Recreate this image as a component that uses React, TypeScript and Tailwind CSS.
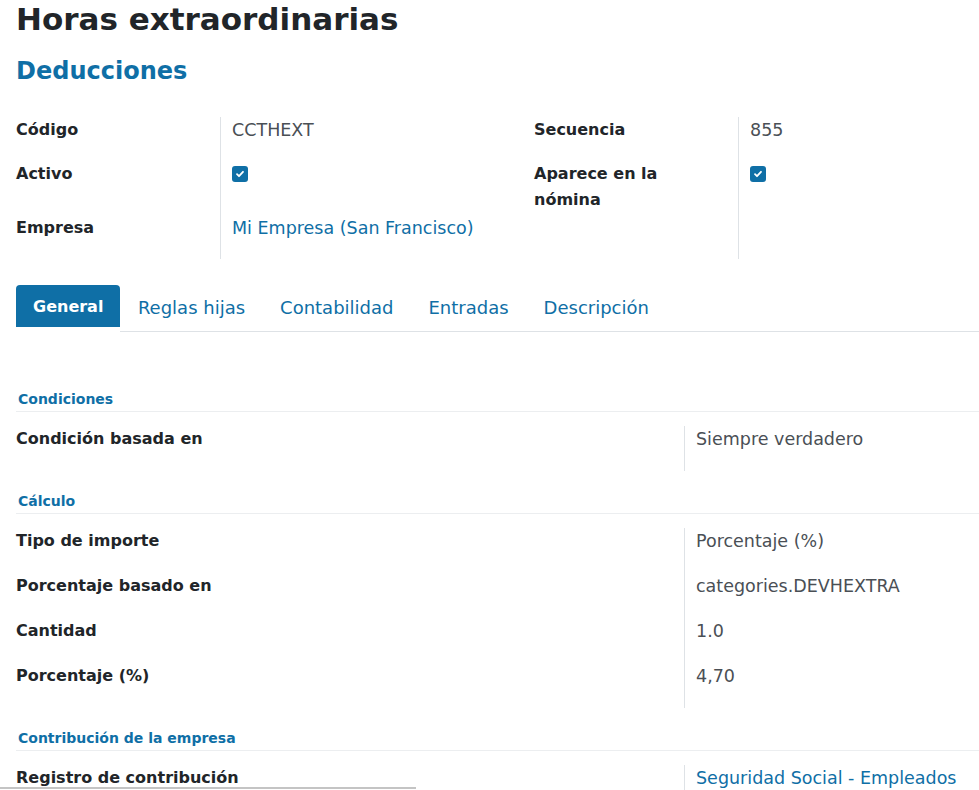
const blue = "text-[#0f6fa6]";

function Check() {
  return (
    <span className="mt-[5px] flex h-[16px] w-[16px] items-center justify-center rounded-[3px] bg-[#0f6fa6]">
      <svg width="10" height="10" viewBox="0 0 10 10" fill="none">
        <path d="M2 5.2l2 2 4-4.4" stroke="white" strokeWidth="1.8" strokeLinecap="round" strokeLinejoin="round" />
      </svg>
    </span>
  );
}

const topLeft = [
  { label: "Código", value: "CCTHEXT", h: "h-[44px]" },
  { label: "Activo", check: true, h: "h-[54px]" },
  { label: "Empresa", value: "Mi Empresa (San Francisco)", link: true, h: "h-[44px]" },
];

const topRight = [
  { label: "Secuencia", value: "855", h: "h-[44px]" },
  { label: "Aparece en la nómina", check: true, h: "h-[54px]" },
];

type Field = { label: string; value?: string; check?: boolean; link?: boolean; h: string };

function Group({ rows, width }: { rows: Field[]; width: string }) {
  return (
    <div className={`flex ${width}`}>
      <div className="flex w-[204px] flex-col">
        {rows.map((r) => (
          <div key={r.label} className={`${r.h} pr-3 text-[16px] font-bold leading-[26px] text-[#212529]`}>
            {r.label}
          </div>
        ))}
      </div>
      <div className="flex flex-col border-l border-[#dee2e6] pl-[11px]">
        {rows.map((r) => (
          <div
            key={r.label}
            className={`${r.h} whitespace-nowrap text-[17.5px] leading-[26px] ${r.link ? blue : "text-[#4a4f55]"}`}
          >
            {r.check ? <Check /> : r.value}
          </div>
        ))}
      </div>
    </div>
  );
}

const tabs = ["Reglas hijas", "Contabilidad", "Entradas", "Descripción"];

type Row = { label: string; value: string; link?: boolean };

function Section({ title, rows, gap }: { title: string; rows: Row[]; gap: string }) {
  return (
    <div className={gap}>
      <div className={`border-b border-[#eceef0] pb-[2px] pl-[2px] text-[14px] font-bold leading-[20px] ${blue}`}>
        {title}
      </div>
      <div className="mt-[14px] flex">
        <div className="flex w-[668px] flex-col">
          {rows.map((r) => (
            <div key={r.label} className="h-[45px] text-[16px] font-bold leading-[26px] text-[#212529]">
              {r.label}
            </div>
          ))}
        </div>
        <div className="flex flex-1 flex-col border-l border-[#dee2e6] pl-[11px]">
          {rows.map((r) => (
            <div
              key={r.label}
              className={`h-[45px] whitespace-nowrap text-[17.5px] leading-[26px] ${r.link ? blue : "text-[#4a4f55]"}`}
            >
              {r.value}
            </div>
          ))}
        </div>
      </div>
    </div>
  );
}

export default function App() {
  return (
    <div className="relative h-[790px] w-[979px] overflow-hidden bg-white font-['DejaVu_Sans',sans-serif]">
      <div className="pl-[16px]">
        <h1 className="text-[31px] font-bold leading-[38px] text-[#212529]">Horas extraordinarias</h1>
        <h2 className={`mt-[18px] text-[24px] font-bold leading-[30px] ${blue}`}>Deducciones</h2>

        <div className="mt-[31px] flex">
          <Group rows={topLeft} width="w-[518px]" />
          <Group rows={topRight} width="flex-1" />
        </div>

        <div className="mt-[26px] flex items-end">
          <div className="flex h-[42px] items-center self-start rounded-t-[4px] bg-[#0f6fa6] px-[17px] pt-[2px] text-[16px] font-bold text-white">
            General
          </div>
          <div className="flex h-[47px] flex-1 items-start border-b border-[#dee2e6]">
            {tabs.map((t) => (
              <div key={t} className={`flex h-[42px] items-center px-[17.5px] pt-[2px] text-[18px] ${blue}`}>
                {t}
              </div>
            ))}
          </div>
        </div>

        <div className="mt-[57px]">
          <Section gap="" title="Condiciones" rows={[{ label: "Condición basada en", value: "Siempre verdadero" }]} />
          <Section
            gap="mt-[20px]"
            title="Cálculo"
            rows={[
              { label: "Tipo de importe", value: "Porcentaje (%)" },
              { label: "Porcentaje basado en", value: "categories.DEVHEXTRA" },
              { label: "Cantidad", value: "1.0" },
              { label: "Porcentaje (%)", value: "4,70" },
            ]}
          />
          <Section
            gap="mt-[20px]"
            title="Contribución de la empresa"
            rows={[{ label: "Registro de contribución", value: "Seguridad Social - Empleados", link: true }]}
          />
        </div>
      </div>
      <div className="absolute bottom-[1px] left-0 h-[2px] w-[416px] bg-[#c4c4c4]" />
    </div>
  );
}
